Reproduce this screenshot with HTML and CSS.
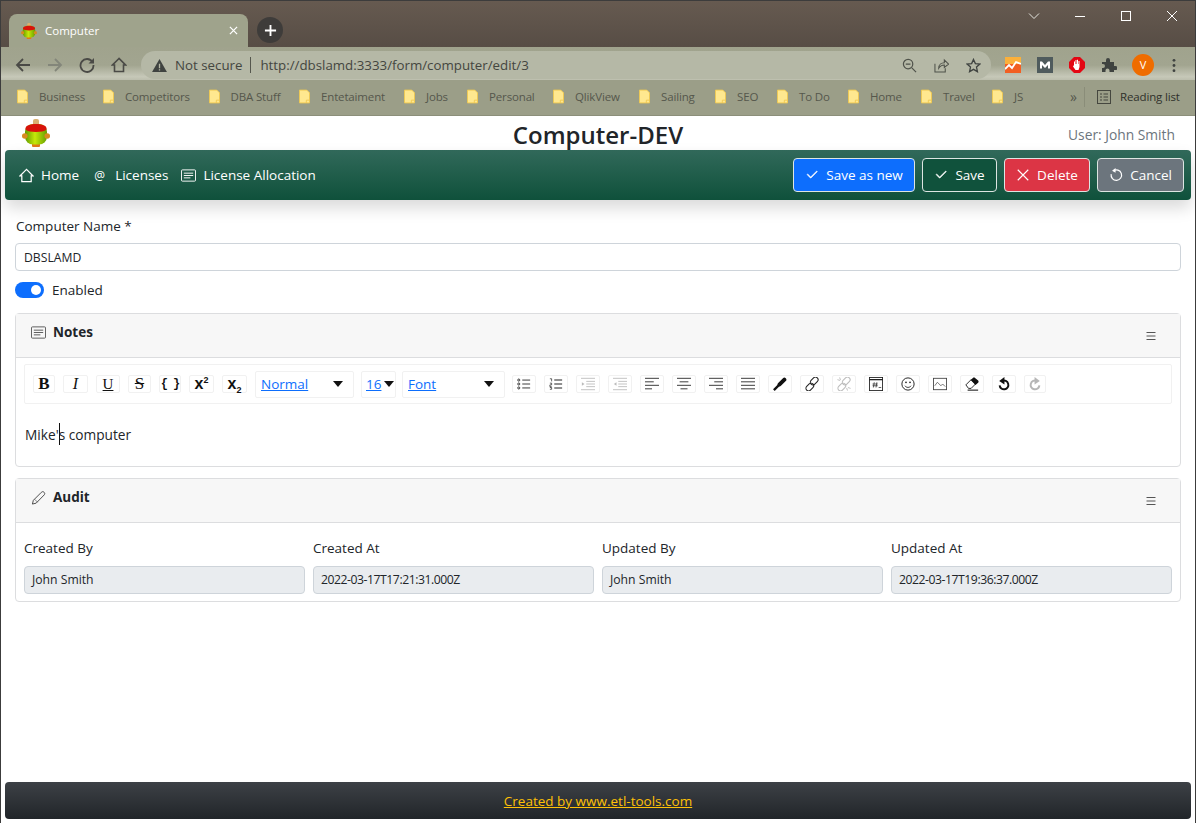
FILE: index.html
```html
<!DOCTYPE html>
<html>
	<head>
		<title>Computer</title>
		<link rel="stylesheet" href="styles.css">
	</head>
	<body>
		<svg class="sprite">
			<defs>
				<linearGradient id="logo-body" x1="0" x2="1" y1="0" y2="0">
					<stop offset="0" stop-color="#5f9a00"/>
					<stop offset=".45" stop-color="#c6e80a"/>
					<stop offset="1" stop-color="#659f00"/>
				</linearGradient>
			</defs>
			<symbol id="logo" viewBox="0 0 28 28">
				<rect x="11" y="0" width="6" height="7" rx="2" fill="#d9b070"/>
				<rect x="10" y="23" width="8" height="5" rx="1" fill="#e0781a"/>
				<rect x="3" y="5" width="22" height="20.500" rx="8" fill="url(#logo-body)"/>
				<path d="M3.500 9.500c0-2.800 4.500-4.500 10.500-4.500s10.500 1.700 10.500 4.500v1c-2 1.800-6 2.500-10.500 2.500s-8.500-.7-10.500-2.500z" fill="#d8130a"/>
				<circle cx="2.800" cy="17" r="2.800" fill="#d88a20"/>
				<circle cx="25.200" cy="17" r="2.800" fill="#d88a20"/>
			</symbol>
			<symbol id="folder" viewBox="0 0 12 15">
				<path d="M.5.500h8l3 3v11h-11z" fill="#ffe88f" stroke="#f0c850"/>
				<path d="M8 14.500v-3h3.500" fill="none" stroke="#f0c850"/>
			</symbol>
			<symbol id="check" viewBox="0 0 16 16">
				<path d="M13.854 3.646a.5.5 0 0 1 0 .708l-7 7a.5.5 0 0 1-.708 0l-3.500-3.500a.5.5 0 1 1 .708-.708L6.500 10.293l6.646-6.647a.5.5 0 0 1 .708 0z" fill="currentColor" stroke="currentColor" stroke-width=".7"/>
			</symbol>
			<symbol id="card-text" viewBox="0 0 16 16">
				<rect x=".5" y="2" width="15" height="12" rx="1" fill="none" stroke="currentColor"/>
				<path d="M3 5.500h10M3 8h10M3 10.500h7" stroke="currentColor" fill="none"/>
			</symbol>
			<symbol id="menu" viewBox="0 0 12 12">
				<path d="M1.500 2.500h9M1.500 6h9M1.500 9.500h9" stroke="#555" stroke-width="1" fill="none"/>
			</symbol>
		</svg>

		<div class="window">
			<div class="titlebar">
				<div class="tab">
					<svg class="favicon"><use href="#logo"/></svg>
					<span class="tab-title">Computer</span>
					<svg class="tab-close" viewBox="0 0 10 10"><path d="M1 1l8 8M9 1l-8 8" stroke="#fff" stroke-width="1.400"/></svg>
				</div>
				<div class="newtab">
					<svg viewBox="0 0 14 14"><path d="M7 1v12M1 7h12" stroke="#fff" stroke-width="2"/></svg>
				</div>
				<div class="winctl">
					<svg viewBox="0 0 12 12"><path d="M1 3.500l5 5 5-5" fill="none" stroke="#e6e6e0"/></svg>
					<svg viewBox="0 0 12 12"><path d="M1 6.500h10" stroke="#fff"/></svg>
					<svg viewBox="0 0 12 12"><rect x="1.500" y="1.500" width="9" height="9" fill="none" stroke="#fff"/></svg>
					<svg viewBox="0 0 12 12"><path d="M1 1l10 10M11 1L1 11" stroke="#fff"/></svg>
				</div>
			</div>

			<div class="toolbar">
				<svg class="nav-btn" viewBox="0 0 16 16"><path d="M15 8H2M8 2L2 8l6 6" fill="none" stroke="#4a4a46" stroke-width="1.800"/></svg>
				<svg class="nav-btn" viewBox="0 0 16 16"><path d="M1 8h13M8 2l6 6-6 6" fill="none" stroke="#83867a" stroke-width="1.800"/></svg>
				<svg class="nav-btn" viewBox="0 0 16 16"><path d="M13.500 5A6.500 6.500 0 1 0 14.500 8" fill="none" stroke="#4a4a46" stroke-width="1.800"/><path d="M15 1v5.500H9.500z" fill="#4a4a46"/></svg>
				<svg class="nav-btn" viewBox="0 0 16 16"><path d="M8 1.500L1.500 8H3.500v6.500h9V8h2z" fill="none" stroke="#4a4a46" stroke-width="1.600"/></svg>
				<div class="omnibox">
					<svg class="warn" viewBox="0 0 16 14"><path d="M8 0l8 14H0z" fill="#3f4340"/><path d="M8 5v5M8 11v1.500" stroke="#b5b8a6" stroke-width="1.400"/></svg>
					<span class="not-secure">Not secure</span>
					<span class="url">http://dbslamd:3333/form/computer/edit/3</span>
					<svg class="omni-icon" viewBox="0 0 16 16"><circle cx="6.500" cy="6.500" r="5" fill="none" stroke="#4f524a" stroke-width="1.300"/><path d="M10.500 10.500l4.500 4.500M4 6.500h5" stroke="#4f524a" stroke-width="1.300"/></svg>
					<svg class="omni-icon" viewBox="0 0 16 16"><path d="M1 6v9h11v-4" fill="none" stroke="#4f524a" stroke-width="1.100"/><path d="M5 11c0-4 3-6 6-6V2l4.500 4.500L11 10V7.500C8.500 7.500 6.500 8.500 5 11z" fill="none" stroke="#4f524a" stroke-width="1.100"/></svg>
					<svg class="omni-icon" viewBox="0 0 16 16"><path d="M8 1.500l2 4.500 4.800.5-3.600 3.200 1 4.800L8 12.100l-4.200 2.400 1-4.800L1.200 6.500 6 6z" fill="none" stroke="#3f4340" stroke-width="1.400"/></svg>
				</div>
				<div class="extensions">
					<svg class="ext" viewBox="0 0 16 16"><rect width="16" height="16" fill="#f25f22"/><rect width="16" height="7" fill="#fbb03b"/><path d="M0 12l4-4 3 3 4-6 5 2" fill="none" stroke="#fff" stroke-width="1.800"/></svg>
					<svg class="ext" viewBox="0 0 16 16"><rect width="16" height="16" fill="#4f5b5d"/><path d="M3 11.500v-7h2l3 3.500 3-3.500h2v7h-2V8L8 11 5 8v3.500z" fill="#fff"/></svg>
					<svg class="ext" viewBox="0 0 16 16"><path d="M5 0h6l5 5v6l-5 5H5l-5-5V5z" fill="#e30613"/><path d="M5 8V4.500h1V7h.5V3h1v4H8V2.800h1V7h.5V4h1v6l-1 3H6.500L4 9.500z" fill="#fff"/></svg>
					<svg class="ext" viewBox="0 0 16 16"><path d="M1 5h4V3a2 2 0 0 1 4 0v2h4v4h1.500a2 2 0 0 1 0 4H13v2H8.500v-1.500a2 2 0 0 0-4 0V15H1v-4h1a2 2 0 0 0 0-4H1z" fill="#3f4340"/></svg>
					<span class="avatar">V</span>
					<svg class="kebab" viewBox="0 0 4 16"><circle cx="2" cy="2.500" r="1.500" fill="#3f4340"/><circle cx="2" cy="8" r="1.500" fill="#3f4340"/><circle cx="2" cy="13.500" r="1.500" fill="#3f4340"/></svg>
				</div>
			</div>

			<div class="bookmarks">
				<a class="bm"><svg><use href="#folder"/></svg>Business</a>
				<a class="bm"><svg><use href="#folder"/></svg>Competitors</a>
				<a class="bm"><svg><use href="#folder"/></svg>DBA Stuff</a>
				<a class="bm"><svg><use href="#folder"/></svg>Entetaiment</a>
				<a class="bm"><svg><use href="#folder"/></svg>Jobs</a>
				<a class="bm"><svg><use href="#folder"/></svg>Personal</a>
				<a class="bm"><svg><use href="#folder"/></svg>QlikView</a>
				<a class="bm"><svg><use href="#folder"/></svg>Sailing</a>
				<a class="bm"><svg><use href="#folder"/></svg>SEO</a>
				<a class="bm"><svg><use href="#folder"/></svg>To Do</a>
				<a class="bm"><svg><use href="#folder"/></svg>Home</a>
				<a class="bm"><svg><use href="#folder"/></svg>Travel</a>
				<a class="bm"><svg><use href="#folder"/></svg>JS</a>
				<span class="bm-more">»</span>
				<span class="bm-reading">
					<svg viewBox="0 0 14 14"><rect x=".5" y=".5" width="13" height="13" fill="none" stroke="#45473f"/><path d="M3 4h2M6.500 4H11M3 7h2M6.500 7H11M3 10h2M6.500 10H11" stroke="#45473f"/></svg>
					Reading list
				</span>
			</div>

			<div class="page">
				<div class="header">
					<svg class="logo"><use href="#logo"/></svg>
					<h1 class="title">Computer-DEV</h1>
					<div class="user">User: John Smith</div>
				</div>

				<div class="navbar">
					<a class="nav-link">
						<svg viewBox="0 0 16 16"><path d="M8 1.500L1 8.500h2v6h10v-6h2z" fill="none" stroke="#fff" stroke-width="1.300"/></svg>
						Home
					</a>
					<a class="nav-link nav-tight"><span class="at">@</span>Licenses</a>
					<a class="nav-link">
						<svg><use href="#card-text"/></svg>
						License Allocation
					</a>
					<div class="actions">
						<button class="btn btn-blue"><svg><use href="#check"/></svg>Save as new</button>
						<button class="btn btn-green"><svg><use href="#check"/></svg>Save</button>
						<button class="btn btn-red"><svg viewBox="0 0 16 16"><path d="M2 2l12 12M14 2L2 14" stroke="#fff" stroke-width="1.300"/></svg>Delete</button>
						<button class="btn btn-grey"><svg viewBox="0 0 16 16"><path d="M5 3.200A6 6 0 1 1 2.500 7" fill="none" stroke="#fff" stroke-width="1.400"/><path d="M7.500 0v5.500L3.500 3z" fill="#fff"/></svg>Cancel</button>
					</div>
				</div>

				<div class="content">
					<label class="field-label">Computer Name *</label>
					<input class="input" type="text" value="DBSLAMD">
					<div class="switch-row">
						<span class="switch"><span class="knob"></span></span>
						<span>Enabled</span>
					</div>

					<div class="card card-notes">
						<div class="card-header">
							<svg class="card-icon"><use href="#card-text"/></svg>
							<b>Notes</b>
							<svg class="card-menu"><use href="#menu"/></svg>
						</div>
						<div class="card-body">
							<div class="editor-bar">
								<span class="opt w22 ed-b">B</span>
								<span class="opt w25 ed-i">I</span>
								<span class="opt ed-u">U</span>
								<span class="opt w23 ed-s">S</span>
								<span class="opt w22 ed-c">{ }</span>
								<span class="opt w25 ed-x"><span>x<sup>2</sup></span></span>
								<span class="opt w25 ed-x"><span>x<sub>2</sub></span></span>
								<span class="drop w98"><a>Normal</a><i class="caret"></i></span>
								<span class="drop w36"><a>16</a><i class="caret"></i></span>
								<span class="drop w102"><a>Font</a><i class="caret"></i></span>
								<span class="opt"><svg viewBox="0 0 16 14"><path d="M6 2.500h9M6 7h9M6 11.500h9" stroke="#222" fill="none"/><circle cx="2" cy="2.500" r="1.200" fill="none" stroke="#222"/><circle cx="2" cy="7" r="1.200" fill="none" stroke="#222"/><circle cx="2" cy="11.500" r="1.200" fill="none" stroke="#222"/></svg></span>
								<span class="opt"><svg viewBox="0 0 16 14"><path d="M6 2.500h9M6 7h9M6 11.500h9" stroke="#222" stroke-width="1.200" fill="none"/><path d="M1 1h2v3M1 6h2v2H1v2h2M1 11h2v2H1" stroke="#222" stroke-width=".8" fill="none"/></svg></span>
								<span class="opt off"><svg viewBox="0 0 16 14"><path d="M0 .500h16M6 4h10M6 7h10M6 10h10M0 13.500h16" stroke="#222" fill="none"/><path d="M1 5l3 2-3 2z" fill="#222"/></svg></span>
								<span class="opt off"><svg viewBox="0 0 16 14"><path d="M0 .500h16M6 4h10M6 7h10M6 10h10M0 13.500h16" stroke="#222" fill="none"/><path d="M4 5L1 7l3 2z" fill="#222"/></svg></span>
								<span class="opt"><svg viewBox="0 0 16 14"><path d="M0 .500h16M0 4.500h10M0 8.500h16M0 12.500h8" stroke="#222" fill="none"/></svg></span>
								<span class="opt"><svg viewBox="0 0 16 14"><path d="M0 .500h16M3 4.500h10M0 8.500h16M4 12.500h8" stroke="#222" fill="none"/></svg></span>
								<span class="opt"><svg viewBox="0 0 16 14"><path d="M0 .500h16M6 4.500h10M0 8.500h16M8 12.500h8" stroke="#222" fill="none"/></svg></span>
								<span class="opt"><svg viewBox="0 0 16 14"><path d="M0 .500h16M0 4.500h16M0 8.500h16M0 12.500h16" stroke="#222" fill="none"/></svg></span>
								<span class="opt"><svg viewBox="0 0 16 16"><path d="M1 15l8-8" stroke="#111" stroke-width="2.600"/><path d="M7.500 8.500l5.500-5.500" stroke="#111" stroke-width="4.500" stroke-linecap="round"/></svg></span>
								<span class="opt"><svg viewBox="0 0 16 16"><g fill="none" stroke="#222" stroke-width="1.200"><rect x="7.500" y="-.5" width="6" height="10" rx="3" transform="rotate(45 10.500 4.500)"/><rect x="2.500" y="6.500" width="6" height="10" rx="3" transform="rotate(45 5.500 11.500)"/></g></svg></span>
								<span class="opt off"><svg viewBox="0 0 16 16"><g fill="none" stroke="#222" stroke-width="1.200"><rect x="7.500" y="-.5" width="6" height="10" rx="3" transform="rotate(45 10.500 4.500)"/><rect x="2.500" y="6.500" width="6" height="10" rx="3" transform="rotate(45 5.500 11.500)"/><path d="M3 .5l1 3M.5 3l3 1M12 15.500l-1-3M15.500 13l-3-1" stroke-width="1"/></g></svg></span>
								<span class="opt"><svg viewBox="0 0 16 16"><rect x=".5" y=".5" width="15" height="15" fill="none" stroke="#222"/><path d="M0 3h16" stroke="#222" stroke-width="1.500"/><path d="M6 6l-1 6M9 6l-1 6M4 8h6M4 10h6M11 12h3" stroke="#222" stroke-width=".8"/></svg></span>
								<span class="opt"><svg viewBox="0 0 16 16"><circle cx="8" cy="8" r="7" fill="none" stroke="#222" stroke-width="1.100"/><circle cx="5.700" cy="6" r="1" fill="#222"/><circle cx="10.300" cy="6" r="1" fill="#222"/><path d="M4.500 10c1.500 2.500 5.500 2.500 7 0" fill="none" stroke="#222"/></svg></span>
								<span class="opt"><svg viewBox="0 0 16 14"><rect x=".5" y=".5" width="15" height="13" fill="none" stroke="#444"/><path d="M2 9l3-4 4 4 2-2 3 3" fill="none" stroke="#444" stroke-width=".8"/></svg></span>
								<span class="opt"><svg viewBox="0 0 16 16"><path d="M1 9l6-6 5 5-5 5H4z" fill="#fff" stroke="#111"/><path d="M6.500 3.500L9 1c.8-.7 1.800-.7 2.500 0L15 4c.7.800.7 1.800 0 2.500L12 9z" fill="#111"/><path d="M3 15h12" stroke="#111" stroke-width="1.200"/></svg></span>
								<span class="opt"><svg viewBox="0 0 16 16"><path d="M6 4.500A5 5 0 1 1 3 9.500" fill="none" stroke="#111" stroke-width="2.200"/><path d="M8.500 0v8.500L2.500 4.500z" fill="#111"/></svg></span>
								<span class="opt off w22"><svg viewBox="0 0 16 16"><path d="M10 4.500A5 5 0 1 0 13 9.500" fill="none" stroke="#111" stroke-width="2.200"/><path d="M7.500 0v8.500l6-4z" fill="#111"/></svg></span>
							</div>
							<div class="editor-text">Mike'<span class="caret-bar"></span>s computer</div>
						</div>
					</div>

					<div class="card">
						<div class="card-header">
							<svg class="card-icon" viewBox="0 0 16 16"><path d="M1.500 15l1-4L11 2.500c1-1 2-1 3 0s.8 2 0 2.800L5.500 14z" fill="none" stroke="#444" stroke-width="1"/><path d="M4 10l3 3" stroke="#444" stroke-width=".7"/></svg>
							<b>Audit</b>
							<svg class="card-menu"><use href="#menu"/></svg>
						</div>
						<div class="card-body audit-grid">
							<div>
								<label class="audit-label">Created By</label>
								<div class="readonly">John Smith</div>
							</div>
							<div>
								<label class="audit-label">Created At</label>
								<div class="readonly stamp">2022-03-17T17:21:31.000Z</div>
							</div>
							<div>
								<label class="audit-label">Updated By</label>
								<div class="readonly">John Smith</div>
							</div>
							<div>
								<label class="audit-label">Updated At</label>
								<div class="readonly stamp">2022-03-17T19:36:37.000Z</div>
							</div>
						</div>
					</div>
				</div>

				<div class="footer"><a class="footer-link">Created by www.etl-tools.com</a></div>
			</div>
		</div>
	</body>
</html>
```
FILE: styles.css
```css
* {
	box-sizing: border-box;
}
body {
	margin: 0;
	font-family: "Open Sans", "Noto Sans", sans-serif;
	font-size: 13.500px;
	color: #212529;
	background: #fff;
}
.sprite {
	display: block;
	width: 0;
	height: 0;
}
.window {
	display: flex;
	flex-direction: column;
	height: 823px;
	border: 1px solid #3c3c3c;
	border-bottom: 0;
	overflow: hidden;
}

/* browser chrome */
.titlebar {
	display: flex;
	align-items: flex-end;
	height: 46px;
	padding-left: 8px;
	background: linear-gradient(#665a50, #574d45);
}
.tab {
	display: flex;
	align-items: center;
	width: 239px;
	height: 33px;
	padding: 0 10px 0 12px;
	background: #9fa38c;
	border-radius: 8px 8px 0 0;
	color: #fff;
	font-size: 11.500px;
}
.favicon {
	width: 16px;
	height: 16px;
	margin-right: 8px;
}
.tab-title {
	flex: 1;
}
.tab-close {
	width: 9px;
	height: 9px;
}
.newtab {
	display: flex;
	align-items: center;
	justify-content: center;
	width: 26px;
	height: 26px;
	margin: 0 0 4px 9px;
	background: #3e3c3a;
	border-radius: 50%;
}
.newtab svg {
	width: 13px;
	height: 13px;
}
.winctl {
	display: flex;
	gap: 34px;
	align-self: flex-start;
	margin: 9px 0 0 auto;
	padding-right: 17px;
}
.winctl svg {
	width: 12px;
	height: 12px;
}
.toolbar {
	display: flex;
	align-items: flex-start;
	height: 33px;
	padding: 4px 0 0 14px;
	background: linear-gradient(#a0a38d, #a2a590 55%, #c6c8b8 90%, #bcbead);
}
.nav-btn {
	width: 16px;
	height: 16px;
	margin: 6px 16px 0 0;
}
.omnibox {
	display: flex;
	align-items: center;
	width: 850px;
	height: 28px;
	margin-left: -2px;
	padding: 0 10px 0 11px;
	background: #b5b8a6;
	border-radius: 14px;
	font-size: 13.300px;
	color: #44463f;
}
.warn {
	width: 15px;
	height: 13px;
	margin-right: 8px;
}
.not-secure {
	padding-right: 8px;
	border-right: 1px solid #55574e;
	line-height: 16px;
}
.url {
	flex: 1;
	margin-left: 9px;
}
.omni-icon {
	width: 15px;
	height: 15px;
	margin-left: 17px;
}
.extensions {
	display: flex;
	align-items: center;
	gap: 16px;
	height: 28px;
	margin-left: 14px;
}
.ext {
	width: 16px;
	height: 16px;
}
.avatar {
	width: 22px;
	height: 22px;
	margin-left: -1px;
	background: #ef6c00;
	border-radius: 50%;
	color: #fff;
	font-size: 11px;
	line-height: 22px;
	text-align: center;
}
.kebab {
	width: 4px;
	height: 15px;
	margin-left: 2px;
}
.bookmarks {
	display: grid;
	grid-template-columns: 86px 105.500px 90.500px 105px 63px 86px 86px 76px 62px 71px 73px 71px 78px 14px auto;
	align-items: center;
	height: 36px;
	padding: 0 0 2px 16px;
	background: #9b9e88;
	border-bottom: 1px solid #8c8f7a;
	font-size: 11.500px;
	letter-spacing: -.15px;
	color: #55574c;
}
.bm {
	display: flex;
	align-items: center;
}
.bm svg {
	width: 11px;
	height: 15px;
	margin-right: 11px;
}
.bm-more {
	font-size: 14px;
}
.bm-reading {
	display: flex;
	align-items: center;
	height: 20px;
	padding-left: 12px;
	border-left: 1px solid #8a8d79;
	color: #2f312b;
}
.bm-reading svg {
	width: 14px;
	height: 14px;
	margin-right: 9px;
}

/* page */
.page {
	display: flex;
	flex: 1;
	flex-direction: column;
	min-height: 0;
	padding: 0 4px;
}
.header {
	display: grid;
	grid-template-columns: 1fr auto 1fr;
	align-items: center;
	height: 34px;
}
.logo {
	width: 28px;
	height: 28px;
	margin: 0 0 0 17px;
}
.title {
	margin: 4px 0 0;
	font-size: 24px;
	font-weight: 600;
	line-height: 30px;
}
.user {
	padding: 2px 16px 0 0;
	color: #6c757d;
	font-size: 13.800px;
	text-align: right;
}
.navbar {
	display: flex;
	align-items: center;
	height: 50px;
	padding: 0 7px 0 14px;
	background: linear-gradient(#31695a, #0f513b);
	border-radius: 4px;
	box-shadow: 0 8px 16px rgba(0, 0, 0, .15);
	color: #fff;
}
.nav-link {
	display: flex;
	align-items: center;
	margin-right: 15px;
}
.nav-tight {
	margin-right: 13px;
}
.nav-link svg {
	width: 15px;
	height: 15px;
	margin-right: 7px;
}
.at {
	width: 15px;
	margin-right: 6px;
	font-size: 12px;
}
.actions {
	display: flex;
	gap: 7px;
	margin-left: auto;
}
.btn {
	display: flex;
	align-items: center;
	justify-content: center;
	height: 34px;
	border: 1px solid #dde5e2;
	border-radius: 4px;
	color: #fff;
	font: inherit;
}
.btn svg {
	width: 14px;
	height: 14px;
	margin-right: 7px;
}
.btn-blue {
	width: 122px;
	background: #0d6efd;
}
.btn-green {
	width: 75px;
	background: #10523c;
}
.btn-red {
	width: 86px;
	background: #dc3545;
}
.btn-grey {
	width: 87px;
	background: #6c757d;
}
.content {
	flex: 1;
	padding: 17px 10px 0;
}
.field-label {
	display: block;
	height: 26px;
	line-height: 18px;
	padding-left: 1px;
}
.input {
	display: block;
	width: 100%;
	height: 28px;
	padding: 0 8px;
	border: 1px solid #ced4da;
	border-radius: 4px;
	color: #212529;
	font: inherit;
	font-size: 12.200px;
}
.switch-row {
	display: flex;
	align-items: center;
	gap: 8px;
	height: 16px;
	margin: 11px 0 15px;
}
.switch {
	display: flex;
	align-items: center;
	justify-content: flex-end;
	width: 29px;
	height: 16px;
	padding-right: 3px;
	background: #0d6efd;
	border-radius: 8px;
}
.knob {
	width: 10px;
	height: 10px;
	background: #fff;
	border-radius: 50%;
}
.card {
	border: 1px solid #dcdddf;
	border-radius: 4px;
}
.card-notes {
	height: 154px;
	margin-bottom: 11px;
}
.card-header {
	display: flex;
	align-items: center;
	height: 44px;
	padding: 0 23px 7px 15px;
	background: #f7f7f7;
	border-bottom: 1px solid #dcdddf;
}
.card-icon {
	width: 15px;
	height: 15px;
	margin-right: 7px;
	color: #555;
}
.card-menu {
	width: 12px;
	height: 12px;
	margin: 7px 0 0 auto;
}
.card-body {
	padding: 6px 8px 7px;
}
.editor-bar {
	display: flex;
	align-items: center;
	gap: 8px;
	height: 40px;
	padding-left: 8px;
	border: 1px solid #f1f1f1;
	border-radius: 2px;
}
.opt {
	display: flex;
	align-items: center;
	justify-content: center;
	flex: none;
	width: 24px;
	height: 18px;
	background: #fff;
	border: 1px solid #f1f1f1;
	border-radius: 2px;
	color: #111;
	font-family: "Liberation Serif", serif;
	font-size: 14px;
}
.opt svg {
	width: 14px;
	height: 14px;
}
.off svg {
	opacity: .3;
}
.w22 {
	width: 22px;
}
.w23 {
	width: 23px;
}
.w25 {
	width: 25px;
}
.ed-b {
	font-weight: bold;
	font-size: 17px;
}
.ed-i {
	font-style: italic;
	font-size: 16px;
}
.ed-u {
	text-decoration: underline;
	font-size: 15px;
}
.ed-s {
	font-size: 17px;
	text-decoration: line-through;
}
.ed-c {
	font-family: "Liberation Mono", monospace;
	font-size: 12px;
	font-weight: bold;
	letter-spacing: -1px;
}
.ed-x {
	font-family: "Liberation Sans", sans-serif;
	font-size: 16px;
	font-weight: bold;
	line-height: 1;
}
.ed-x sup,
.ed-x sub {
	font-size: 9px;
	line-height: 0;
}
.drop {
	display: flex;
	align-items: center;
	justify-content: space-between;
	flex: none;
	height: 27px;
	margin-right: -1px;
	padding: 0 10px 0 5px;
	background: #fff;
	border: 1px solid #f1f1f1;
	border-radius: 2px;
}
.drop a {
	color: #0d6efd;
	text-decoration: underline;
}
.w98 {
	width: 99px;
}
.w36 {
	width: 35px;
	margin-right: -2px;
	padding: 0 1px 0 4px;
}
.w102 {
	width: 103px;
}
.caret {
	width: 0;
	height: 0;
	border: 5px solid transparent;
	border-top: 6px solid #111;
	border-bottom: 0;
}
.editor-text {
	display: flex;
	align-items: center;
	height: 20px;
	margin: 20px 0 0 1px;
	font-size: 13.700px;
	white-space: pre;
}
.caret-bar {
	width: 1px;
	height: 22px;
	background: #111;
	margin-right: -1px;
}
.audit-grid {
	display: grid;
	grid-template-columns: repeat(4, 1fr);
	gap: 8px;
	padding: 16px 8px 7px;
}
.audit-label {
	display: block;
	height: 27px;
	line-height: 18px;
}
.readonly {
	height: 28px;
	padding-left: 7px;
	background: #e9ecef;
	border: 1px solid #ced4da;
	border-radius: 4px;
	font-size: 12.200px;
	line-height: 26px;
}
.stamp {
	letter-spacing: -.45px;
}
.footer {
	flex: none;
	height: 37px;
	margin-bottom: 4px;
	background: linear-gradient(#3d4146, #212529);
	border-radius: 4px;
	line-height: 38px;
	text-align: center;
}
.footer-link {
	color: #ffc107;
	text-decoration: underline;
}
```
